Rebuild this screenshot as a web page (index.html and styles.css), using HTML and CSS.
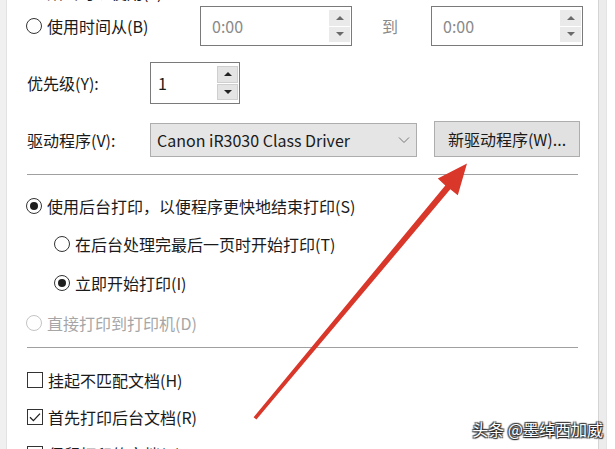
FILE: index.html
```html
<!DOCTYPE html>
<html lang="zh-CN">
<head>
    <meta charset="UTF-8">
    <title>打印机属性 - 高级</title>
    <link rel="stylesheet" href="styles.css">
</head>
<body>
    <div class="window">
        <div class="edge-left"></div>
        <div class="panel">
            <div class="row row-cut">
                <span class="radio checked"></span>
                <span class="label">始终可以使用(L)</span>
            </div>

            <div class="row row-time">
                <div class="col-label">
                    <span class="radio"></span>
                    <span class="label">使用时间从(B)</span>
                </div>
                <div class="spin spin-time">
                    <span class="spin-value muted">0:00</span>
                    <div class="spin-btns">
                        <span class="spin-btn"><i class="tri up"></i></span>
                        <span class="spin-btn"><i class="tri down"></i></span>
                    </div>
                </div>
                <span class="to muted">到</span>
                <div class="spin spin-time">
                    <span class="spin-value muted">0:00</span>
                    <div class="spin-btns">
                        <span class="spin-btn"><i class="tri up"></i></span>
                        <span class="spin-btn"><i class="tri down"></i></span>
                    </div>
                </div>
            </div>

            <div class="row row-priority">
                <div class="col-label short">
                    <span class="label">优先级(Y):</span>
                </div>
                <div class="spin spin-priority">
                    <span class="spin-value">1</span>
                    <div class="spin-btns dark">
                        <span class="spin-btn"><i class="tri up"></i></span>
                        <span class="spin-btn"><i class="tri down"></i></span>
                    </div>
                </div>
            </div>

            <div class="row row-driver">
                <div class="col-label short">
                    <span class="label">驱动程序(V):</span>
                </div>
                <div class="select">
                    <span>Canon iR3030 Class Driver</span>
                    <svg class="chevron" width="12" height="8" viewBox="0 0 12 8">
                        <path d="M1 1.5 L6 6.5 L11 1.5" fill="none" stroke="#777" stroke-width="1"/>
                    </svg>
                </div>
                <div class="button">新驱动程序(W)...</div>
            </div>

            <div class="sep sep-1"></div>

            <div class="row opt opt-1">
                <span class="radio checked"></span>
                <span class="label">使用后台打印，以便程序更快地结束打印(S)</span>
            </div>
            <div class="row opt opt-2 indent">
                <span class="radio"></span>
                <span class="label">在后台处理完最后一页时开始打印(T)</span>
            </div>
            <div class="row opt opt-3 indent">
                <span class="radio checked"></span>
                <span class="label">立即开始打印(I)</span>
            </div>
            <div class="row opt opt-4 disabled">
                <span class="radio"></span>
                <span class="label">直接打印到打印机(D)</span>
            </div>

            <div class="sep sep-2"></div>

            <div class="row opt chk-1">
                <span class="check"></span>
                <span class="label">挂起不匹配文档(H)</span>
            </div>
            <div class="row opt chk-2">
                <span class="check">
                    <svg width="14" height="14" viewBox="0 0 14 14">
                        <path d="M2 7.2 L5.4 10.6 L12 3.6" fill="none" stroke="#1e1e1e" stroke-width="1.3"/>
                    </svg>
                </span>
                <span class="label">首先打印后台文档(R)</span>
            </div>
            <div class="row opt chk-3">
                <span class="check"></span>
                <span class="label">保留打印的文档(K)</span>
            </div>
        </div>
        <div class="edge-right"></div>
    </div>

    <!-- 红色箭头标注 -->
    <svg class="arrow" width="615" height="449" viewBox="0 0 615 449">
        <polygon points="253.6,417.2 445.3,185.4 437.8,178.6 467,163.5 457.8,195.2 450.3,189.2 256.4,419.6" fill="#d8372a"/>
    </svg>

    <div class="watermark">头条 @墨绰西加威</div>
</body>
</html>
```

FILE: styles.css
```css
body {
    margin: 0;
    width: 615px;
    height: 449px;
    overflow: hidden;
    background: #ffffff;
    font-family: "Noto Sans CJK SC", "Noto Sans", sans-serif;
    font-size: 16px;
    color: #1a1a1a;
    position: relative;
}
.window {
    display: flex;
    height: 449px;
}
.edge-left {
    width: 6px;
    background: #f0f0f0;
    border-right: 1px solid #e2e2e2;
}
.panel {
    width: 571px;
    padding-left: 20px;
}
.edge-right {
    width: 7px;
    background: #ececec;
    border-left: 1px solid #d4d4d4;
    border-right: 1px solid #e4e4e4;
}

.row {
    display: flex;
    align-items: center;
}
.label {
    line-height: 20px;
    white-space: nowrap;
}
.muted {
    color: #8a8a8a;
}

/* radio & checkbox */
.radio {
    width: 14px;
    height: 14px;
    border: 1px solid #333;
    border-radius: 50%;
    margin-left: -1px;
    margin-right: 5px;
    position: relative;
    flex-shrink: 0;
}
.radio.checked::after {
    content: "";
    position: absolute;
    left: 3px;
    top: 3px;
    width: 8px;
    height: 8px;
    border-radius: 50%;
    background: #1e1e1e;
}
.check {
    width: 14px;
    height: 14px;
    border: 1px solid #333;
    margin-right: 5px;
    display: flex;
    align-items: center;
    justify-content: center;
    flex-shrink: 0;
}
.disabled {
    color: #a6a6a6;
}
.disabled .radio {
    border-color: #c4c4c4;
}

.row-cut {
    height: 16px;
    margin-top: -16px;
}

.row-time {
    height: 40px;
    margin-top: 6px;
}
.col-label {
    width: 173px;
    display: flex;
    align-items: center;
}
.col-label.short {
    width: 123px;
}

/* spin boxes */
.spin {
    height: 100%;
    box-sizing: border-box;
    border: 1px solid #7a7a7a;
    display: flex;
    align-items: center;
    justify-content: space-between;
    padding: 3px 1px 3px 11px;
}
.spin-time {
    width: 152px;
}
.spin-priority {
    width: 90px;
    padding-left: 7px;
}
.spin-btns {
    width: 21px;
    height: 100%;
    display: flex;
    flex-direction: column;
    gap: 1px;
}
.spin-btn {
    flex: 1;
    background: #eaeaea;
    display: flex;
    align-items: center;
    justify-content: center;
}
.spin-btns.dark .spin-btn {
    background: #e4e4e4;
    border: 1px solid #cfcfcf;
}
.tri {
    width: 0;
    height: 0;
    border-left: 4px solid transparent;
    border-right: 4px solid transparent;
}
.tri.up {
    border-bottom: 4px solid #6a6a6a;
}
.tri.down {
    border-top: 4px solid #6a6a6a;
}
.spin-btns.dark .tri.up {
    border-bottom-color: #222;
}
.spin-btns.dark .tri.down {
    border-top-color: #222;
}
.to {
    margin: 0 33px 0 30px;
}

.row-priority {
    height: 42px;
    margin-top: 16px;
}
.row-driver {
    height: 35px;
    margin-top: 18px;
}
.select {
    width: 267px;
    height: 34px;
    box-sizing: border-box;
    background: #e5e5e5;
    border: 1px solid #adadad;
    display: flex;
    align-items: center;
    justify-content: space-between;
    padding: 0 6px 0 6px;
}
.button {
    margin-left: 17px;
    width: 146px;
    height: 36px;
    box-sizing: border-box;
    background: #e1e1e1;
    border: 1px solid #adadad;
    display: flex;
    align-items: center;
    justify-content: center;
    margin-top: -1px;
}

.sep {
    width: 551px;
    height: 1px;
    background: #a0a0a0;
}
.sep-1 {
    margin-top: 17px;
}
.sep-2 {
    margin-top: 9px;
}

.opt {
    height: 30px;
}
.indent {
    padding-left: 28px;
}
.opt-1 {
    margin-top: 16px;
}
.opt-2 {
    margin-top: 8px;
}
.opt-3 {
    margin-top: 9px;
}
.opt-4 {
    margin-top: 10px;
}
.chk-1 {
    margin-top: 17px;
}
.chk-2 {
    margin-top: 7px;
}
.chk-3 {
    margin-top: 7px;
}

.arrow {
    position: absolute;
    left: 0;
    top: 0;
    pointer-events: none;
}
.watermark {
    position: absolute;
    right: 12px;
    top: 417px;
    font-size: 16px;
    color: #ffffff;
    text-shadow: 0 0 1px #222, 1px 1px 1px #222, -1px -1px 1px #444, 1px -1px 1px #444, -1px 1px 1px #444;
}
```
